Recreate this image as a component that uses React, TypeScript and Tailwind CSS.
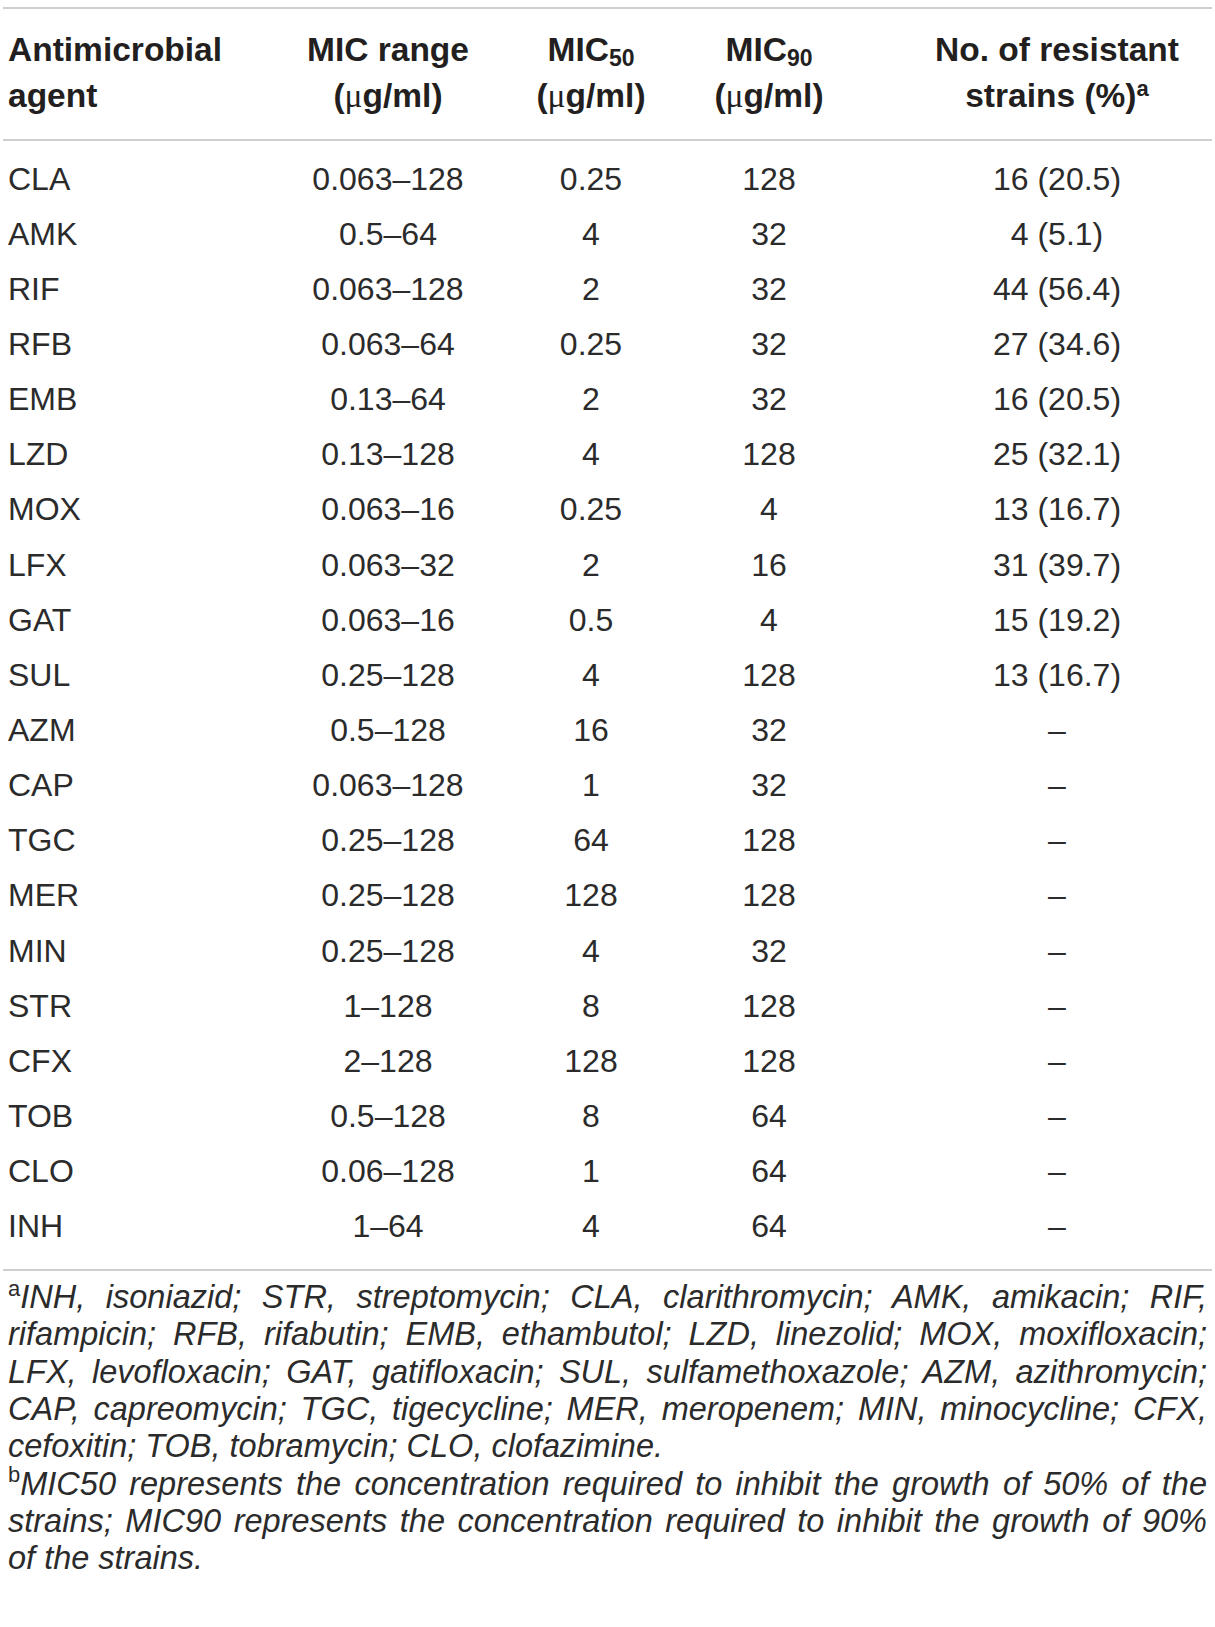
import React from 'react'

type Row = [string, string, string, string, string]

const rows: Row[] = [
  ['CLA', '0.063–128', '0.25', '128', '16 (20.5)'],
  ['AMK', '0.5–64', '4', '32', '4 (5.1)'],
  ['RIF', '0.063–128', '2', '32', '44 (56.4)'],
  ['RFB', '0.063–64', '0.25', '32', '27 (34.6)'],
  ['EMB', '0.13–64', '2', '32', '16 (20.5)'],
  ['LZD', '0.13–128', '4', '128', '25 (32.1)'],
  ['MOX', '0.063–16', '0.25', '4', '13 (16.7)'],
  ['LFX', '0.063–32', '2', '16', '31 (39.7)'],
  ['GAT', '0.063–16', '0.5', '4', '15 (19.2)'],
  ['SUL', '0.25–128', '4', '128', '13 (16.7)'],
  ['AZM', '0.5–128', '16', '32', '–'],
  ['CAP', '0.063–128', '1', '32', '–'],
  ['TGC', '0.25–128', '64', '128', '–'],
  ['MER', '0.25–128', '128', '128', '–'],
  ['MIN', '0.25–128', '4', '32', '–'],
  ['STR', '1–128', '8', '128', '–'],
  ['CFX', '2–128', '128', '128', '–'],
  ['TOB', '0.5–128', '8', '64', '–'],
  ['CLO', '0.06–128', '1', '64', '–'],
  ['INH', '1–64', '4', '64', '–'],
]

const grid = 'grid grid-cols-[265px_240px_166px_190px_1fr]'

function Mu() {
  return <span className="font-['Liberation_Serif',serif] font-normal">μ</span>
}

function Mark({ c }: { c: string }) {
  return <span className="relative -top-[0.55em] text-[22px] not-italic leading-none">{c}</span>
}

// each footnote line is its own block so the breaks match the print layout
const notes: { text: React.ReactNode; last?: boolean }[] = [
  {
    text: (
      <>
        <Mark c="a" />INH, isoniazid; STR, streptomycin; CLA, clarithromycin; AMK, amikacin; RIF,
      </>
    ),
  },
  { text: 'rifampicin; RFB, rifabutin; EMB, ethambutol; LZD, linezolid; MOX, moxifloxacin;' },
  { text: 'LFX, levofloxacin; GAT, gatifloxacin; SUL, sulfamethoxazole; AZM, azithromycin;' },
  { text: 'CAP, capreomycin; TGC, tigecycline; MER, meropenem; MIN, minocycline; CFX,' },
  { text: 'cefoxitin; TOB, tobramycin; CLO, clofazimine.', last: true },
  {
    text: (
      <>
        <Mark c="b" />MIC50 represents the concentration required to inhibit the growth of 50% of the
      </>
    ),
  },
  { text: 'strains; MIC90 represents the concentration required to inhibit the growth of 90%' },
  { text: 'of the strains.', last: true },
]

export default function App() {
  return (
    <div className="w-[1215px] bg-white font-['Liberation_Sans',Arial,sans-serif] text-[#231f20]">
      <div className="mx-[3px] pt-[7px]">
        <div className="h-[2px] bg-[#cfcfcf]" />

        {/* header */}
        <div className={`${grid} pt-[18px] pb-[20px] text-[33.5px] font-bold leading-[46px]`}>
          <div className="pl-[5px]">
            Antimicrobial
            <br />
            agent
          </div>
          <div className="text-center">
            MIC range
            <br />(<Mu />g/ml)
          </div>
          <div className="text-center">
            MIC<span className="relative top-[0.2em] text-[23px] leading-none">50</span>
            <br />(<Mu />g/ml)
          </div>
          <div className="text-center">
            MIC<span className="relative top-[0.2em] text-[23px] leading-none">90</span>
            <br />(<Mu />g/ml)
          </div>
          <div className="pl-[38px] text-center">
            No. of resistant
            <br />
            strains (%)<span className="relative -top-[0.5em] text-[22px] leading-none">a</span>
          </div>
        </div>

        <div className="h-[2px] bg-[#cfcfcf]" />

        {/* body */}
        <div className="pt-[10px] pb-[15px] text-[32px] text-[#2b2b2b]">
          {rows.map((r) => (
            <div key={r[0]} className={`${grid} h-[55.15px] items-center`}>
              <div className="pl-[5px]">{r[0]}</div>
              <div className="text-center">{r[1]}</div>
              <div className="text-center">{r[2]}</div>
              <div className="text-center">{r[3]}</div>
              <div className="pl-[38px] text-center">{r[4]}</div>
            </div>
          ))}
        </div>

        <div className="h-[2px] bg-[#cfcfcf]" />

        {/* footnotes */}
        <div className="px-[5px] pt-[8px] pb-[20px] text-[32.5px] italic text-[#2b2b2b] leading-[37.35px]">
          {notes.map((n, i) => (
            <div
              key={i}
              className={n.last ? 'whitespace-nowrap text-left' : 'whitespace-nowrap text-justify [text-align-last:justify]'}
            >
              {n.text}
            </div>
          ))}
        </div>
      </div>
    </div>
  )
}
